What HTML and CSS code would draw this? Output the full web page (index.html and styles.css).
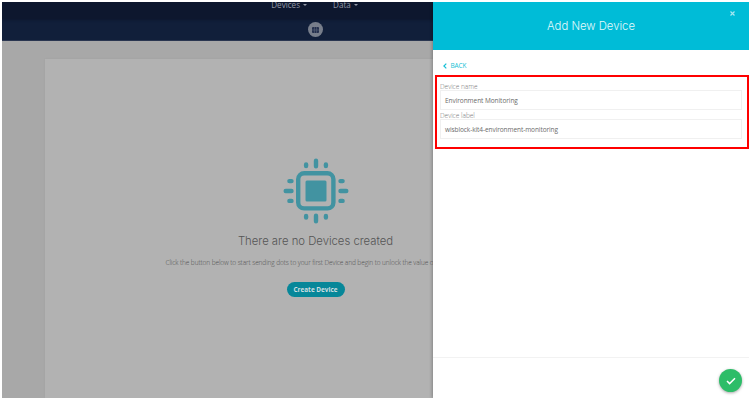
FILE: index.html
```html
<!DOCTYPE html>
<html lang="en">
<head>
<meta charset="utf-8">
<title>Add New Device</title>
<link rel="stylesheet" href="styles.css">
</head>
<body>
<div class="app">
  <main class="page">
    <div class="canvas">
      <nav class="nav">
        <span class="nav-item">Devices<i class="caret"></i></span>
        <span class="nav-item">Data<i class="caret"></i></span>
      </nav>
      <div class="subnav">
        <span class="grid-button">
          <svg width="7" height="6" viewBox="0 0 7 6"><rect width="7" height="6" rx="1" fill="#232f4d"/><path d="M0 3h7M2.4 0v6M4.6 0v6" stroke="#5d677b" stroke-width=".6"/></svg>
        </span>
      </div>
      <section class="empty">
        <svg class="chip" width="66" height="66" viewBox="0 0 66 66" fill="none" stroke="#4293a1" stroke-width="4.4" stroke-linecap="round">
          <rect x="15.2" y="15.2" width="35.2" height="35.2" rx="6"/>
          <rect x="22.5" y="22.5" width="21" height="21" rx="1.5" fill="#4293a1" stroke="none"/>
          <path d="M33 2.7v5.6M33 57.7v5.6M2.7 33h5.8M57.5 33h5.8M23.1 6.4v1.7M42.9 6.4v1.7M23.1 57.9v1.7M42.9 57.9v1.7M6.4 23.1h2.1M6.4 42.9h2.1M57.5 23.1h2.1M57.5 42.9h2.1"/>
        </svg>
        <h1 class="empty-title">There are no Devices created</h1>
        <p class="empty-text">Click the button below to start sending dots to your first Device and begin to unlock the value of your data.</p>
        <button class="create">Create Device</button>
      </section>
    </div>
  </main>
  <aside class="drawer">
    <header class="drawer-head">
      <h2 class="drawer-title">Add New Device</h2>
      <svg class="close" width="5" height="5" viewBox="0 0 5 5"><path d="M.5.5l4 4M4.5.5l-4 4" stroke="#a5e7f1" stroke-width="1.2"/></svg>
    </header>
    <a class="back"><svg width="4" height="6" viewBox="0 0 4 6"><path d="M3.3.6L.9 3l2.4 2.4" fill="none" stroke="#16bfd5" stroke-width="1.2"/></svg><span class="back-label">BACK</span></a>
    <form class="fields">
      <label class="label">Device name</label>
      <div class="input"><span class="value">Environment Monitoring</span></div>
      <label class="label">Device label</label>
      <div class="input"><span class="value value-slug">wisblock-kit4-environment-monitoring</span></div>
    </form>
    <footer class="drawer-foot">
      <span class="confirm"><svg width="10" height="8" viewBox="0 0 10 8"><path d="M1 4l2.6 2.6L9 1.2" fill="none" stroke="#fff" stroke-width="1.5"/></svg></span>
    </footer>
  </aside>
</div>
</body>
</html>
```
FILE: styles.css
```css
* { box-sizing: border-box; }
body { margin: 0; background: #fff; font-family: "Open Sans", sans-serif; }
h1, h2, p { margin: 0; font-weight: 400; white-space: nowrap; }
svg { display: block; flex: none; }
.app { display: flex; width: 747px; height: 396px; margin: 2px; overflow: hidden; }
.page { width: 431px; flex: none; overflow: hidden; background: #a8a8a8; }
.canvas { width: 627px; height: 396px; display: flex; flex-direction: column; }
.nav { height: 17px; flex: none; background: #0d172e; display: flex; justify-content: center; align-items: flex-start; gap: 26px; padding-right: 2px; box-shadow: 0 1px 2px #0d172e; position: relative; }
.nav-item { display: flex; align-items: center; gap: 3px; height: 6px; font-size: 8.1px; line-height: 10px; color: #9298a5; }
.caret { border: 2px solid transparent; border-top-color: #9298a5; border-bottom: 0; }
.subnav { height: 22px; flex: none; background: #111f3a; border-bottom: 1px solid #2a3650; display: flex; justify-content: center; align-items: center; }
.grid-button { width: 15px; height: 15px; border-radius: 50%; background: #777e8b; display: flex; align-items: center; justify-content: center; }
.empty { flex: 1; margin: 18px 42px 0 43px; padding: 99px 1px 0 0; background: #b2b2b2; box-shadow: 0 0 2px #a0a0a0; display: flex; flex-direction: column; align-items: center; }
.empty-title { margin-top: 9px; font: 300 11.3px/16px Inter, sans-serif; color: #555; }
.empty-text { margin-top: 9px; font-size: 6.5px; line-height: 10px; font-weight: 300; letter-spacing: -.085px; color: #505050; }
.create { margin-top: 14px; width: 58px; height: 15px; flex: none; border: 0; border-radius: 8px; padding: 0; background: #078799; color: #d0dfe1; font: 700 6.4px/15px "Open Sans", sans-serif; }
.drawer { width: 316px; flex: none; background: #fff; box-shadow: -1px 0 3px rgba(0, 0, 0, .25); display: flex; flex-direction: column; position: relative; }
.drawer-head { height: 48px; flex: none; background: #00bcd7; display: flex; align-items: center; justify-content: center; position: relative; }
.drawer-title { font: 300 11.3px/16px Inter, sans-serif; color: #e2fafc; }
.close { position: absolute; top: 9px; right: 14px; }
.back { height: 10px; margin: 11px 0 0 10px; display: flex; align-items: center; gap: 3.5px; color: #16bfd5; font-size: 6.5px; line-height: 10px; letter-spacing: -.1px; }
.fields { height: 74px; margin: 4px 0 0 2px; border: 2px solid #ff0000; padding: 5px 5px 0 3px; }
.label { display: block; height: 9px; font-size: 6.5px; line-height: 9px; font-weight: 300; color: #777; }
.input { height: 20px; margin-top: -1px; margin-bottom: 1px; border: 1px solid #f0f0f0; padding-left: 4px; display: flex; align-items: center; font-size: 6.5px; letter-spacing: -.06px; color: #6a6a6a; }
.value-slug { letter-spacing: -.08px; }
.drawer-foot { height: 41px; margin-top: auto; border-top: 1px solid #f2f2f2; display: flex; justify-content: flex-end; padding: 11px 7px 0 0; }
.confirm { width: 23px; height: 23px; border-radius: 50%; background: #2dbd68; box-shadow: 0 1px 3px rgba(0, 0, 0, .35); display: flex; align-items: center; justify-content: center; }
```
